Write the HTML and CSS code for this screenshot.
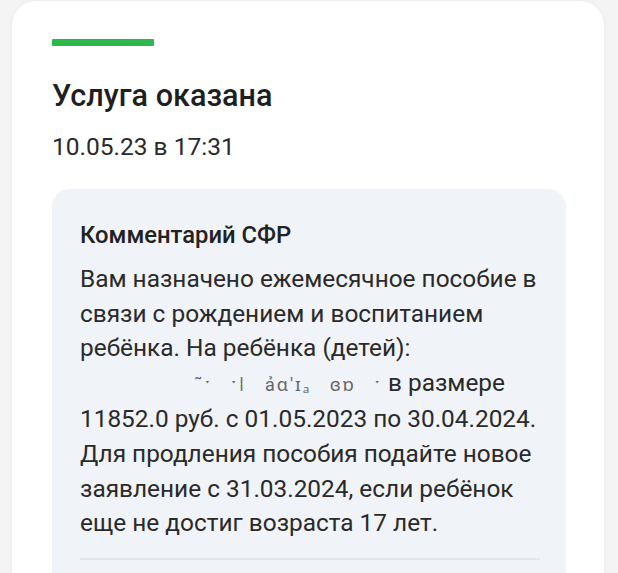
FILE: index.html
```html
<!DOCTYPE html>
<html lang="ru">
<head>
  <meta charset="UTF-8">
  <title>Услуга оказана</title>
  <link rel="stylesheet" href="styles.css">
</head>
<body>
  <div class="card">
    <div class="status-bar"></div>
    <h1 class="status-title">Услуга оказана</h1>
    <p class="status-date">10.05.23 в 17:31</p>

    <div class="comment">
      <h2 class="comment-title">Комментарий СФР</h2>
      <p class="comment-text">
        Вам назначено ежемесячное пособие в связи с рождением и воспитанием ребёнка. На ребёнка (детей):
        <span class="hidden-name">˜ˑ ˑǀ ảɑ'ɪₐ ɞɒ ˑ</span>в размере 11852.0 руб. с 01.05.2023 по 30.04.2024. Для продления пособия подайте новое заявление с 31.03.2024, если ребёнок еще не достиг возраста 17 лет.
      </p>
      <hr class="comment-line">
    </div>
  </div>
</body>
</html>
```

FILE: styles.css
```css
body {
  margin: 0;
  background-color: #f4f4f5;
  font-family: Roboto, 'Noto Sans', sans-serif;
  color: #222222;
  overflow: hidden;
}

/* white card, runs past the bottom of the window */
.card {
  margin-left: 12px;
  width: 592px;
  min-height: 640px;
  margin-top: 1px;
  background: #ffffff;
  border-radius: 24px 24px 0 0;
  box-shadow: 0 0 4px rgba(0, 0, 0, 0.05);
  padding: 38px 38px 0 40px;
  box-sizing: border-box;
}

.status-bar {
  width: 102px;
  height: 7px;
  background-color: #2eb84b;
  border-radius: 1px;
}

.status-title {
  margin: 32px 0 0;
  font-size: 30.6px;
  font-weight: 500;
  line-height: 36px;
  color: #1f1f1f;
}

.status-date {
  margin: 18px 0 0;
  font-size: 24.5px;
  font-weight: 400;
  line-height: 30px;
  color: #2a2a2a;
}

/* grey comment box */
.comment {
  margin-top: 27px;
  background-color: #f0f3f8;
  border-radius: 18px;
  padding: 32px 20px 30px 28px;
  min-height: 420px;
}

.comment-title {
  margin: 0;
  font-size: 23.8px;
  font-weight: 500;
  line-height: 28px;
}

.comment-text {
  margin: 13px 0 0;
  font-size: 24.4px;
  line-height: 34.6px;
  color: #2a2a2a;
}

/* blurred-out child name */
.hidden-name {
  display: inline-block;
  margin: 0 6px 0 114px;
  color: #666666;
  font-size: 18px;
  letter-spacing: 2px;
  word-spacing: 12px;
}

.comment-line {
  border: none;
  height: 2px;
  background-color: #e3e6eb;
  margin: 17px 6px 0 0;
}
```
